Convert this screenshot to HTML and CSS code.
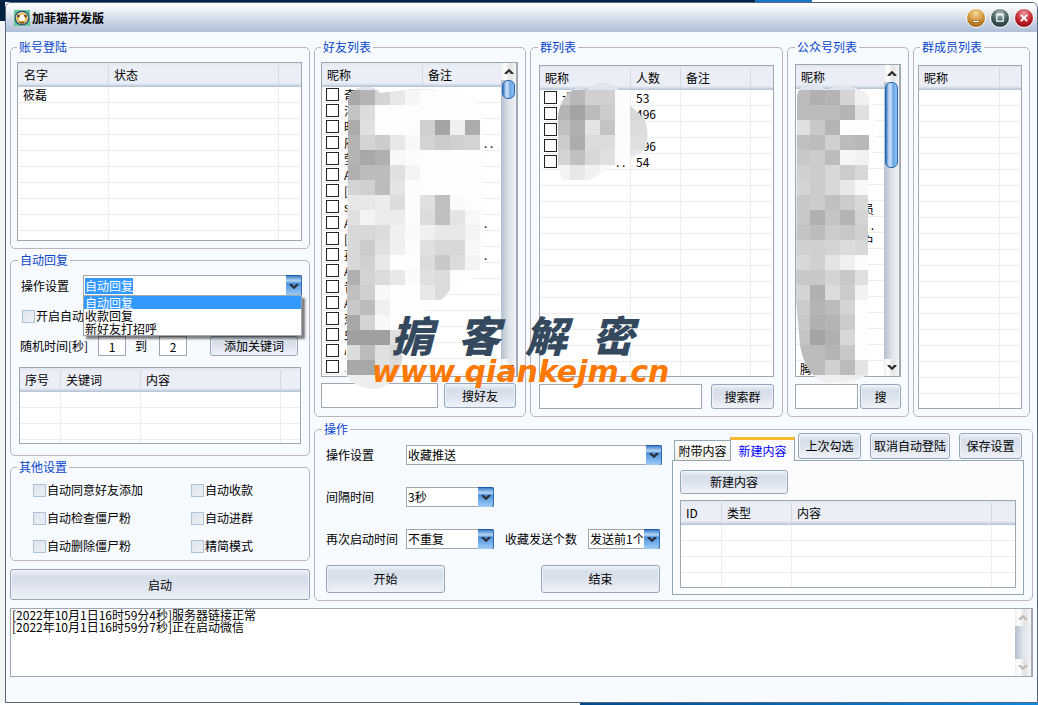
FILE: index.html
```html
<!DOCTYPE html>
<html lang="zh-CN">
<head>
<meta charset="utf-8">
<title>加菲猫开发版</title>
<link rel="stylesheet" href="styles.css">
</head>
<body>
<svg class="defs" aria-hidden="true">
  <defs>
    <symbol id="down" viewBox="0 0 10 7"><path d="M0.5 1h2.500L5 3.200 7 1h2.500v1L5 6.300.5 2z" fill="currentColor"/></symbol>
    <symbol id="up" viewBox="0 0 10 7"><path d="M.5 6H3L5 3.800 7 6h2.500V5L5 .7.500 5z" fill="currentColor"/></symbol>
  </defs>
</svg>
<div class="window">
  <header class="titlebar">
    <svg class="app-icon" viewBox="0 0 16 16" aria-hidden="true">
      <rect width="16" height="16" fill="#65c795"/>
      <circle cx="8" cy="8" r="7.300" fill="#1f2c5c"/>
      <circle cx="8" cy="8" r="6.300" fill="#e8e4b8" stroke="#55709a" stroke-width=".6"/>
      <circle cx="8" cy="8.300" r="5" fill="#e9a81b"/>
      <circle cx="4.500" cy="6" r="1.200" fill="#4d3413"/><circle cx="11.500" cy="6" r="1.200" fill="#4d3413"/>
      <path d="M6.500 4.500h3l2 5-1 1.500h-5L4.500 9.500z" fill="#fff"/>
      <path d="M5 12h6l-1 1.500H6z" fill="#7a4a10"/>
    </svg>
    <h1 class="title">加菲猫开发版</h1>
    <div class="window-buttons">
      <button class="orb orb-min" aria-label="最小化"><svg viewBox="0 0 20 20"><rect x="6.500" y="12.500" width="7" height="2.500" fill="#fff" stroke="#8d4a12" stroke-width=".8"/></svg></button>
      <button class="orb orb-max" aria-label="最大化"><svg viewBox="0 0 20 20"><rect x="6.500" y="6.500" width="7" height="7" fill="none" stroke="#fff" stroke-width="1.400"/><path d="M6 5.500h8" stroke="#fff"/></svg></button>
      <button class="orb orb-close" aria-label="关闭"><svg viewBox="0 0 20 20"><path d="M6.500 6.500l7 7m0-7l-7 7" stroke="#fff" stroke-width="2.200"/></svg></button>
    </div>
  </header>

  <main class="body">
    <div class="columns">
      <div class="left">
        <fieldset class="group account">
          <legend>账号登陆</legend>
          <div class="grid grid-account">
            <table>
              <colgroup><col class="w91"><col class="w170"><col></colgroup>
              <thead><tr><th>名字</th><th>状态</th><th></th></tr></thead>
              <tbody><tr><td>筱磊</td><td></td><td></td></tr><tr class="rest"><td></td><td></td><td></td></tr></tbody>
            </table>
          </div>
        </fieldset>

        <fieldset class="group reply">
          <legend>自动回复</legend>
          <div class="line reply-mode">
            <label for="reply-mode">操作设置</label>
            <div class="combo combo-open">
              <input id="reply-mode" type="text" role="combobox" aria-expanded="true" aria-controls="reply-options" value="自动回复">
              <span class="arrow"><svg><use href="#down"/></svg></span>
              <ul class="options" id="reply-options" role="listbox">
                <li class="current" role="option" aria-selected="true">自动回复</li>
                <li role="option">收款回复</li>
                <li role="option">新好友打招呼</li>
              </ul>
            </div>
          </div>
          <label class="check reply-on"><input type="checkbox">开启自动回复</label>
          <div class="line reply-time">
            <label for="from">随机时间[秒]</label>
            <input id="from" class="field num" type="text" value="1">
            <label for="to">到</label>
            <input id="to" class="field num" type="text" value="2">
            <button class="btn add-key">添加关键词</button>
          </div>
          <div class="grid grid-keys">
            <table>
              <colgroup><col class="w41"><col class="w80"><col class="w140"><col></colgroup>
              <thead><tr><th>序号</th><th>关键词</th><th>内容</th><th></th></tr></thead>
              <tbody><tr class="rest"><td></td><td></td><td></td><td></td></tr></tbody>
            </table>
          </div>
        </fieldset>

        <fieldset class="group others">
          <legend>其他设置</legend>
          <label class="check"><input type="checkbox">自动同意好友添加</label>
          <label class="check"><input type="checkbox">自动收款</label>
          <label class="check"><input type="checkbox">自动检查僵尸粉</label>
          <label class="check"><input type="checkbox">自动进群</label>
          <label class="check"><input type="checkbox">自动删除僵尸粉</label>
          <label class="check"><input type="checkbox">精简模式</label>
        </fieldset>
        <button class="btn start">启动</button>
      </div>

      <div class="right">
        <div class="lists">
          <fieldset class="group friends">
            <legend>好友列表</legend>
            <div class="masked">
              <div class="grid grid-list">
                <table>
                  <colgroup><col class="w101"><col></colgroup>
                  <thead><tr><th>昵称</th><th>备注</th></tr></thead>
                  <tbody>
                    <tr><td><label class="pick"><input type="checkbox">奇</label></td><td></td></tr>
                    <tr><td><label class="pick"><input type="checkbox">汤</label></td><td></td></tr>
                    <tr><td><label class="pick"><input type="checkbox">昭</label></td><td></td></tr>
                    <tr><td><label class="pick"><input type="checkbox">府</label></td><td class="tail">. .</td></tr>
                    <tr><td><label class="pick"><input type="checkbox">莹</label></td><td></td></tr>
                    <tr><td><label class="pick"><input type="checkbox">A</label></td><td></td></tr>
                    <tr><td><label class="pick"><input type="checkbox">[</label></td><td></td></tr>
                    <tr><td><label class="pick"><input type="checkbox">s</label></td><td></td></tr>
                    <tr><td><label class="pick"><input type="checkbox">A</label></td><td class="tail">.</td></tr>
                    <tr><td><label class="pick"><input type="checkbox">[</label></td><td></td></tr>
                    <tr><td><label class="pick"><input type="checkbox">孩</label></td><td class="tail">.</td></tr>
                    <tr><td><label class="pick"><input type="checkbox">A</label></td><td></td></tr>
                    <tr><td><label class="pick"><input type="checkbox">青</label></td><td></td></tr>
                    <tr><td><label class="pick"><input type="checkbox">A</label></td><td></td></tr>
                    <tr><td><label class="pick"><input type="checkbox">葱</label></td><td></td></tr>
                    <tr><td><label class="pick"><input type="checkbox">虫</label></td><td></td></tr>
                    <tr><td><label class="pick"><input type="checkbox">心</label></td><td></td></tr>
                    <tr><td><label class="pick"><input type="checkbox">.</label></td><td></td></tr>
                    <tr class="rest"><td></td><td></td></tr>
                  </tbody>
                </table>
                <div class="scroll"><span class="cap"><svg><use href="#up"/></svg></span><span class="thumb thumb-short"></span><span class="cap cap-end"><svg><use href="#down"/></svg></span></div>
              </div>
              <svg class="mosaic" data-mosaic="friends" viewBox="322 63 200 330" width="200" height="330" aria-hidden="true"></svg>
            </div>
            <div class="search">
              <input class="field" type="text" aria-label="好友"><button class="btn w72">搜好友</button>
            </div>
          </fieldset>

          <fieldset class="group rooms">
            <legend>群列表</legend>
            <div class="masked">
              <div class="grid grid-list">
                <table>
                  <colgroup><col class="w91"><col class="w50"><col class="w70"><col></colgroup>
                  <thead><tr><th>昵称</th><th>人数</th><th>备注</th><th></th></tr></thead>
                  <tbody>
                    <tr><td><label class="pick"><input type="checkbox">大</label></td><td>53</td><td></td><td></td></tr>
                    <tr><td><label class="pick"><input type="checkbox"></label></td><td>496</td><td></td><td></td></tr>
                    <tr><td><label class="pick"><input type="checkbox"></label></td><td></td><td></td><td></td></tr>
                    <tr><td><label class="pick"><input type="checkbox"></label></td><td>196</td><td></td><td></td></tr>
                    <tr><td><label class="pick"><input type="checkbox"><span class="dots">. .</span></label></td><td>54</td><td></td><td></td></tr>
                    <tr class="rest"><td></td><td></td><td></td><td></td></tr>
                  </tbody>
                </table>
              </div>
              <svg class="mosaic" data-mosaic="rooms" viewBox="540 66 120 120" width="120" height="120" aria-hidden="true"></svg>
            </div>
            <div class="search">
              <input class="field" type="text" aria-label="群"><button class="btn w63">搜索群</button>
            </div>
          </fieldset>

          <fieldset class="group accounts">
            <legend>公众号列表</legend>
            <div class="masked">
              <div class="grid grid-list">
                <table>
                  <thead><tr><th>昵称</th></tr></thead>
                  <tbody>
                    <tr><td></td></tr><tr><td></td></tr><tr><td></td></tr><tr><td></td></tr><tr><td></td></tr><tr><td></td></tr><tr><td></td></tr>
                    <tr><td class="end">员</td></tr><tr><td class="end">. .</td></tr><tr><td class="end">户</td></tr>
                    <tr><td></td></tr><tr><td></td></tr><tr><td></td></tr><tr><td></td></tr><tr><td></td></tr><tr><td></td></tr><tr><td></td></tr>
                    <tr><td>腾</td></tr>
                    <tr class="rest"><td></td></tr>
                  </tbody>
                </table>
                <div class="scroll"><span class="cap"><svg><use href="#up"/></svg></span><span class="thumb thumb-long"></span><span class="cap cap-end"><svg><use href="#down"/></svg></span></div>
              </div>
              <svg class="mosaic" data-mosaic="accounts" viewBox="796 65 90 330" width="90" height="330" aria-hidden="true"></svg>
            </div>
            <div class="search">
              <input class="field" type="text" aria-label="公众号"><button class="btn w41">搜</button>
            </div>
          </fieldset>

          <fieldset class="group members">
            <legend>群成员列表</legend>
            <div class="grid grid-list">
              <table>
                <colgroup><col class="w81"><col></colgroup>
                <thead><tr><th>昵称</th><th></th></tr></thead>
                <tbody><tr class="rest"><td></td><td></td></tr></tbody>
              </table>
            </div>
          </fieldset>
        </div>

        <fieldset class="group ops">
          <legend>操作</legend>
          <div class="ops-layout">
            <div class="ops-form">
              <label for="mode">操作设置</label>
              <div class="combo wide"><select id="mode"><option>收藏推送</option></select><span class="arrow"><svg><use href="#down"/></svg></span></div>
              <label class="row-start" for="gap">间隔时间</label>
              <div class="combo"><select id="gap"><option>3秒</option></select><span class="arrow"><svg><use href="#down"/></svg></span></div>
              <label class="row-start" for="again">再次启动时间</label>
              <div class="combo"><select id="again"><option>不重复</option></select><span class="arrow"><svg><use href="#down"/></svg></span></div>
              <label class="count-label" for="count">收藏发送个数</label>
              <div class="combo"><select id="count"><option>发送前1个</option></select><span class="arrow"><svg><use href="#down"/></svg></span></div>
              <div class="ops-buttons"><button class="btn">开始</button><button class="btn">结束</button></div>
            </div>
            <div class="ops-side">
              <div class="tab-row">
                <div class="tabs" role="tablist">
                  <button class="tab" role="tab" aria-selected="false">附带内容</button>
                  <button class="tab tab-on" role="tab" aria-selected="true">新建内容</button>
                </div>
                <button class="btn w63">上次勾选</button>
                <button class="btn w80">取消自动登陆</button>
                <button class="btn w63">保存设置</button>
              </div>
              <div class="pane" role="tabpanel">
                <button class="btn new">新建内容</button>
                <div class="grid grid-content">
                  <table>
                    <colgroup><col class="w41"><col class="w70"><col class="w200"><col></colgroup>
                    <thead><tr><th>ID</th><th>类型</th><th>内容</th><th></th></tr></thead>
                    <tbody><tr class="rest"><td></td><td></td><td></td><td></td></tr></tbody>
                  </table>
                </div>
              </div>
            </div>
          </div>
        </fieldset>
      </div>
    </div>

    <div class="log">
      <textarea readonly aria-label="日志">[2022年10月1日16时59分4秒]服务器链接正常
[2022年10月1日16时59分7秒]正在启动微信</textarea>
      <div class="scroll scroll-off"><span class="cap"><svg><use href="#up"/></svg></span><span class="cap cap-end"><svg><use href="#down"/></svg></span></div>
    </div>
  </main>

  <div class="watermark">
    <div class="mark-name"><span>掮</span><span>客</span><span>解</span><span>密</span></div>
    <div class="mark-url">www.qiankejm.cn</div>
  </div>
</div>
<script src="app.js"></script>
</body>
</html>
```
FILE: styles.css
```css
* { box-sizing: border-box; }

body {
  margin: 0;
  padding: 2px 0 2px 5px;
  min-height: 100vh;
  font: 12px/16px "Noto Sans CJK SC", sans-serif;
  color: #000;
  background:
    linear-gradient(90deg, #00264a 755px, #1976c8 755px 812px, #fff 812px) 0 0 / 100% 2px no-repeat,
    linear-gradient(#00203f, #00203f) 0 0 / 5px 21px no-repeat,
    linear-gradient(90deg, #fff 580px, #004a8c 580px, #0a8ae6) 0 100% / 100% 2px no-repeat,
    #f3f4f6;
}

button, input, select, textarea { font: inherit; color: inherit; margin: 0; border-radius: 0; }
.defs { position: absolute; width: 0; height: 0; }

.window {
  position: relative;
  min-height: 701px;
  border: 1px solid #56657f;
  border-radius: 6px 6px 0 0;
  background: #f7faff;
}

.titlebar {
  display: flex;
  align-items: center;
  height: 29px;
  padding: 0 3px 0 8px;
  border-radius: 5px 5px 0 0;
  background: linear-gradient(#fff, #eef2f6 25%, #c9d4e3 65%, #adbfd8);
}
.app-icon { width: 16px; height: 16px; }
.title { flex: 1; margin: 0 0 0 2px; font-size: 12px; font-weight: 700; line-height: 16px; }
.window-buttons { display: flex; gap: 4px; }
.orb {
  width: 20px;
  height: 20px;
  padding: 0;
  border: 1px solid #fff;
  border-radius: 50%;
}
.orb svg { display: block; width: 18px; height: 18px; }
.orb-min { background: radial-gradient(circle at 50% 25%, #f6d79c, #cf8c2e 55%, #7d4a12); }
.orb-max { background: radial-gradient(circle at 50% 25%, #a9bcbc, #3f5757 55%, #1f3033); }
.orb-close { background: radial-gradient(circle at 50% 25%, #ef9a9a, #bf1f27 55%, #7a0d14); }

.body { display: flex; flex-direction: column; gap: 7px; padding: 7px 4px 0; }
.columns { display: grid; grid-template-columns: 300px 1fr; gap: 4px; }
.left { display: flex; flex-direction: column; gap: 3px; }
.right { display: flex; flex-direction: column; gap: 4px; min-width: 0; }

.group {
  min-width: 0;
  margin: 0;
  padding: 0 7px;
  border: 1px solid #b9b4be;
  border-radius: 5px;
}
.group > legend { height: 16px; padding: 0 2px; margin-left: 0; color: #0a46c8; }

/* list views */
.grid { display: flex; overflow: hidden; border: 1px solid #9fa8b0; background: #fff; }
.grid table { flex: 1; width: 100%; min-width: 0; height: 100%; table-layout: fixed; border-spacing: 0; }
.grid th {
  height: 24px;
  padding: 0 5px;
  text-align: left;
  font-weight: 400;
  background:
    linear-gradient(#d3d9e3, #d3d9e3) 100% 2px / 1px 19px no-repeat,
    linear-gradient(#dfe6ec, #ebeef6 3px 20px, #dfe5ef 21px, #b2c0d4);
}
.grid th:last-child { background: linear-gradient(#dfe6ec, #ebeef6 3px 20px, #dfe5ef 21px, #b2c0d4); }
.grid td {
  height: 16px;
  padding: 0 5px;
  line-height: 15px;
  white-space: nowrap;
  overflow: hidden;
  border-right: 1px solid #ededed;
  border-bottom: 1px solid #ededed;
}
.grid td:first-child { padding-left: 4px; }
.grid-account td:first-child { padding-left: 5px; }
.grid td:last-child { border-right: 0; }
.grid .rest { height: 100%; }
.grid .rest td { border-bottom: 0; background: repeating-linear-gradient(#fff 0 15px, #ededed 15px 16px); }
.grid .tail { padding-left: 61px; }
.grid .end { padding-right: 10px; text-align: right; }
.w41 { width: 41px; } .w50 { width: 50px; } .w63 { width: 63px; } .w70 { width: 70px; }
.w72 { width: 72px; } .w80 { width: 80px; } .w81 { width: 81px; } .w91 { width: 91px; }
.w101 { width: 101px; } .w140 { width: 140px; } .w170 { width: 170px; } .w200 { width: 200px; }

.pick { display: flex; align-items: center; gap: 5px; height: 15px; }
.pick input { appearance: none; flex: none; width: 13px; height: 13px; border: 1px solid #222; background: #fff; }
.dots { margin-left: 54px; }

/* scroll bars */
.scroll {
  flex: none;
  display: flex;
  flex-direction: column;
  width: 16px;
  border-right: 1px solid #a3acb8;
  background: linear-gradient(90deg, #b5bfd2, #c3ccd8 3px, #e0e4ea 8px, #eff0f4);
}
.cap {
  display: flex;
  align-items: center;
  justify-content: center;
  height: 17px;
  color: #2e2e33;
  background: linear-gradient(90deg, #eee, #fff 4px, #e2e2e4 60%, #f7f7f7);
}
.cap svg { width: 10px; height: 7px; }
.cap-end { margin-top: auto; }
.thumb {
  margin: 0 1px;
  border: 1px solid #2465ae;
  border-radius: 6px;
  background: linear-gradient(90deg, #2e75bf, #c2d8f4 3px 5px, #6aa5e2 7px, #8fc2f2);
}
.thumb-short { height: 19px; }
.thumb-long { height: 86px; }
.scroll-off { width: 17px; }
.scroll-off .cap { color: #bcbcb4; }

/* form parts */
.line { display: flex; }
.field { min-width: 0; padding: 0 2px; border: 1px solid #9fa8b0; background: #fff; }
.btn {
  padding: 0;
  white-space: nowrap;
  border: 1px solid #98a6ba;
  border-radius: 3px;
  background: linear-gradient(#f2f5fa, #d6deea 22%, #dbe2ed 50%, #f0f2f8);
  box-shadow: inset 0 0 0 1px #eef2f8;
}
.check { display: flex; align-items: center; gap: 1px; }
.check input {
  appearance: none;
  flex: none;
  width: 13px;
  height: 13px;
  border: 1px solid #aec2d8;
  background: linear-gradient(135deg, #dfe3ec, #eef0f6);
}
.combo { position: relative; display: flex; height: 20px; border: 1px solid #9fa8b0; background: #fff; }
.combo select, .combo input {
  appearance: none;
  flex: 1;
  width: 100%;
  min-width: 0;
  padding: 0 16px 0 1px;
  border: 0;
  outline: 0;
  background: transparent;
  line-height: 16px;
}
.combo input::selection { color: #fff; background: #3399ff; }
.arrow {
  position: absolute;
  inset: -1px -1px -1px auto;
  display: flex;
  align-items: center;
  justify-content: center;
  width: 16px;
  pointer-events: none;
  color: #2d3038;
  border-top: 1px solid #1c5aa8;
  border-right: 1px solid #2c6bb5;
  border-radius: 0 3px 3px 0;
  background: linear-gradient(#3f82cc, #b8d6f4 5px, #4d92dc 7px, #9fcdf6);
}
.arrow svg { width: 10px; height: 7px; }
.options {
  position: absolute;
  z-index: 2;
  top: 100%;
  left: -1px;
  right: -1px;
  margin: 0;
  padding: 0;
  list-style: none;
  line-height: 13px;
  border: 1px solid #9fa8b0;
  background: #fff;
  box-shadow: 3px 3px 2px rgba(0, 0, 0, .5);
}
.options li { height: 13px; padding-left: 1px; }
.options .current { color: #fff; background: #3399ff; }

/* left column */
.account { padding: 7px 7px 7px 6px; }
.grid-account { height: 179px; }
.grid-account th:first-child { padding-left: 6px; }
.reply { display: flex; flex-direction: column; padding: 7px 8px 11px; }
.group.reply > legend { margin-left: -1px; }
.reply-mode { align-items: center; justify-content: space-between; padding: 0 0 0 2px; }
.reply-mode .combo { width: 219px; height: 21px; margin-right: -1px; }
.reply-on { height: 16px; margin: 12px 0 12px 3px; }
.reply-time { align-items: center; height: 20px; padding-left: 1px; }
.reply-time label:first-child { width: 78px; }
.num { width: 28px; height: 20px; text-align: center; }
.reply-time label:nth-of-type(2) { padding: 0 12px 0 9px; }
.add-key { width: 88px; height: 20px; margin-left: 23px; }
.grid-keys { height: 77px; margin-top: 11px; }
.others { display: grid; grid-template-columns: 158px 1fr; grid-auto-rows: 28px; padding: 1px 0 0 22px; }
.group.others > legend { margin-left: -16px; }
.start { height: 31px; margin-top: 5px; }

/* contact lists */
.lists { display: grid; grid-template-columns: 212fr 253fr 122fr 117fr; gap: 4px; padding-right: 3px; }
.lists .group { display: flex; flex-direction: column; padding-bottom: 7px; }
.lists .friends { padding-top: 7px; padding-left: 6px; }
.lists .rooms { padding-top: 10px; padding-left: 8px; padding-right: 8px; }
.lists .rooms > legend { margin-left: -1px; }
.lists .accounts { padding-top: 9px; }
.lists .members { padding-top: 10px; padding-left: 4px; }
.lists .members > legend { margin-left: 2px; }
.masked { position: relative; }
.mosaic { position: absolute; top: 1px; left: 1px; overflow: visible; pointer-events: none; z-index: 1; }
.friends .grid-list { height: 315px; }
.rooms .grid-list { height: 312px; }
.accounts .grid-list { height: 313px; }
.members .grid-list { height: 344px; }
.search { display: flex; gap: 6px; height: 25px; margin-top: 7px; }
.search .field { flex: 1; }
.search .btn { flex: none; }
.friends .search { margin-top: 6px; padding-right: 2px; }
.rooms .search { gap: 9px; }
.accounts .search { gap: 2px; }

/* operations */
.ops { padding: 0 8px 5px 11px; }
.group.ops > legend { margin-left: -4px; }
.ops-layout { display: grid; grid-template-columns: 336px 1fr; gap: 10px; }
.ops-form {
  display: grid;
  grid-template-columns: 80px 88px 94px 72px;
  grid-template-rows: 20px 20px 20px 16px;
  row-gap: 22px;
  align-items: center;
  padding-top: 8px;
}
.ops-form .wide { grid-column: 2 / -1; margin-right: -2px; }
.row-start { grid-column: 1; }
.count-label { text-align: center; }
.ops-buttons { grid-column: 1 / -1; align-self: start; display: flex; justify-content: space-between; margin-top: -6px; }
.ops-buttons .btn { width: 119px; height: 28px; }
.tab-row { position: relative; z-index: 1; display: flex; gap: 9px; align-items: flex-start; margin-top: -4px; padding-right: 2px; }
.tab-row .btn { height: 26px; }
.tabs { display: flex; align-items: flex-end; height: 28px; margin: 0 -6px -1px 2px; }
.tab {
  width: 57px;
  height: 21px;
  padding: 0;
  white-space: nowrap;
  border: 1px solid #91a7b4;
  background: linear-gradient(#fff, #eeeee6);
}
.tab-on {
  width: 65px;
  height: 24px;
  margin-left: -1px;
  color: #00f;
  border-top: 3px solid #ffb92e;
  border-bottom: 0;
  background: #fcfcfe;
}
.pane { padding: 9px 7px 6px; border: 1px solid #91a7b4; background: #fcfcfe; }
.new { display: block; width: 108px; height: 24px; }
.grid-content { height: 88px; margin-top: 6px; }

.log { display: flex; height: 69px; border: 1px solid #9fa8b0; background: #fff; }
.log textarea { flex: 1; padding: 0 1px; border: 0; outline: 0; resize: none; overflow: hidden; line-height: 12px; background: transparent; }

/* site mark over the window */
.watermark { position: absolute; z-index: 3; left: 366px; top: 308px; width: 300px; font-style: italic; font-weight: 900; white-space: nowrap; pointer-events: none; }
.mark-name { display: flex; justify-content: space-between; padding: 0 38px 0 19px; font-size: 42px; line-height: 46px; color: #34495e; }
.mark-url { font: italic 700 30px/30px "DejaVu Sans", sans-serif; color: #ff7800; }
```
FILE: app.js
```js
// Pixelated masks that hide personal names: one two-digit grey per cell, "--" leaves a cell out.
const masks = {
  friends: {
    cols: [347, 360, 375, 390, 405, 420, 435, 450, 465, 480],
    blob: "M348 100Q352 86 366 87Q376 86 380 93L412 89 455 90Q478 98 482 112L482 265Q478 278 450 290Q440 305 423 308L423 330 402 345 402 362Q395 388 372 389 348 386 345 370L347 330Z",
    rows: ["a8 b4 d4 e8 f6", "c4 dc -- --", "ac e0 -- -- -- d0 a4 f0 ac", "b4 d4 cc e8 f8 d4 cc d0 d4",
      "b4 a8 b0 f8 fc", "b0 bc bc e0 f4", "d4 d0 bc e4 fc", "e8 e8 ec dc fc e0 c0 fa", "e0 f4 ec ec fc dc c0 e4 f8",
      "d8 d8 dc f0 fa f0 e8 e8 f4", "d8 cc e0 f0 fc e0 d8 d8 f8", "d8 d0 e8 -- -- dc c8 dc f4", "b0 d4 dc e8 fa e0 dc",
      "c0 d0 f8 -- -- e8 dc", "c8 bc f0", "a8 d4 f8", "a0 a0 a0 e0", "dc bc e0 d8", "a8 a8 e0 dc", "ee ee ee ee"]
  },
  rooms: {
    cols: [557, 570, 585, 600, 615, 630, 648],
    blob: "M558 115Q562 92 578 88L587 90Q600 76 617 88L630 105 645 120Q650 135 645 150 635 157 630 158L612 166 590 180 563 180Q557 170 558 160Z",
    rows: ["c8 b8 d0 d0 fc fc", "b4 a4 bc cc fc d8", "c0 b0 e4 c4 fc dc", "cc ac dc dc fc e0", "d4 c0 d8 e0 fc e8", "f4 e8 f2 f8"]
  },
  accounts: {
    cols: [796, 810, 825, 840, 855, 869],
    blob: "M797 95Q800 84 812 83 822 84 825 90 840 84 855 88 873 92 876 115 876 150 868 165L868 375Q850 384 825 383 805 375 800 345L796 300Z",
    rows: ["bc b0 b4 d4 f0", "bc bc bc b4 e0", "e0 c8 b4", "c0 bc d0 bc b8", "c8 cc bc f6 f2", "d0 cc d8 cc d8",
      "d4 cc d8 e8 f8", "c8 cc c0 cc d8", "c8 b0 c4 b4 d4", "c4 bc cc c8 d0", "d0 d0 d4 dc d8", "d8 d0 e4 f0 fc",
      "c8 c8 d4 c8 e0", "d4 b0 dc cc f2", "cc b4 bc d4", "c8 b0 b4 cc", "c4 a4 b0 d8", "bc bc b4 c8", "bc bc d0 bc e4", "f0 f0 f0 ee ec"]
  }
};

document.querySelectorAll("[data-mosaic]").forEach(svg => {
  const name = svg.dataset.mosaic;
  const { cols, blob, rows } = masks[name];
  let cells = "";
  rows.forEach((row, r) => row.split(" ").forEach((grey, c) => {
    if (grey === "--") return;
    cells += `<rect x="${cols[c]}" y="${90 + r * 15}" width="${cols[c + 1] - cols[c]}" height="15" fill="#${grey.repeat(3)}"/>`;
  }));
  svg.innerHTML = `<clipPath id="clip-${name}"><path d="${blob}"/></clipPath>` +
    `<g clip-path="url(#clip-${name})" shape-rendering="crispEdges">` +
    `<path d="${blob}" fill="#fdfdfe"/><path d="M${cols[0]} 70h90v20h-90z" fill="#dfe4ee"/>${cells}</g>`;
});

const mode = document.getElementById("reply-mode");
mode.focus();
mode.select();
```
